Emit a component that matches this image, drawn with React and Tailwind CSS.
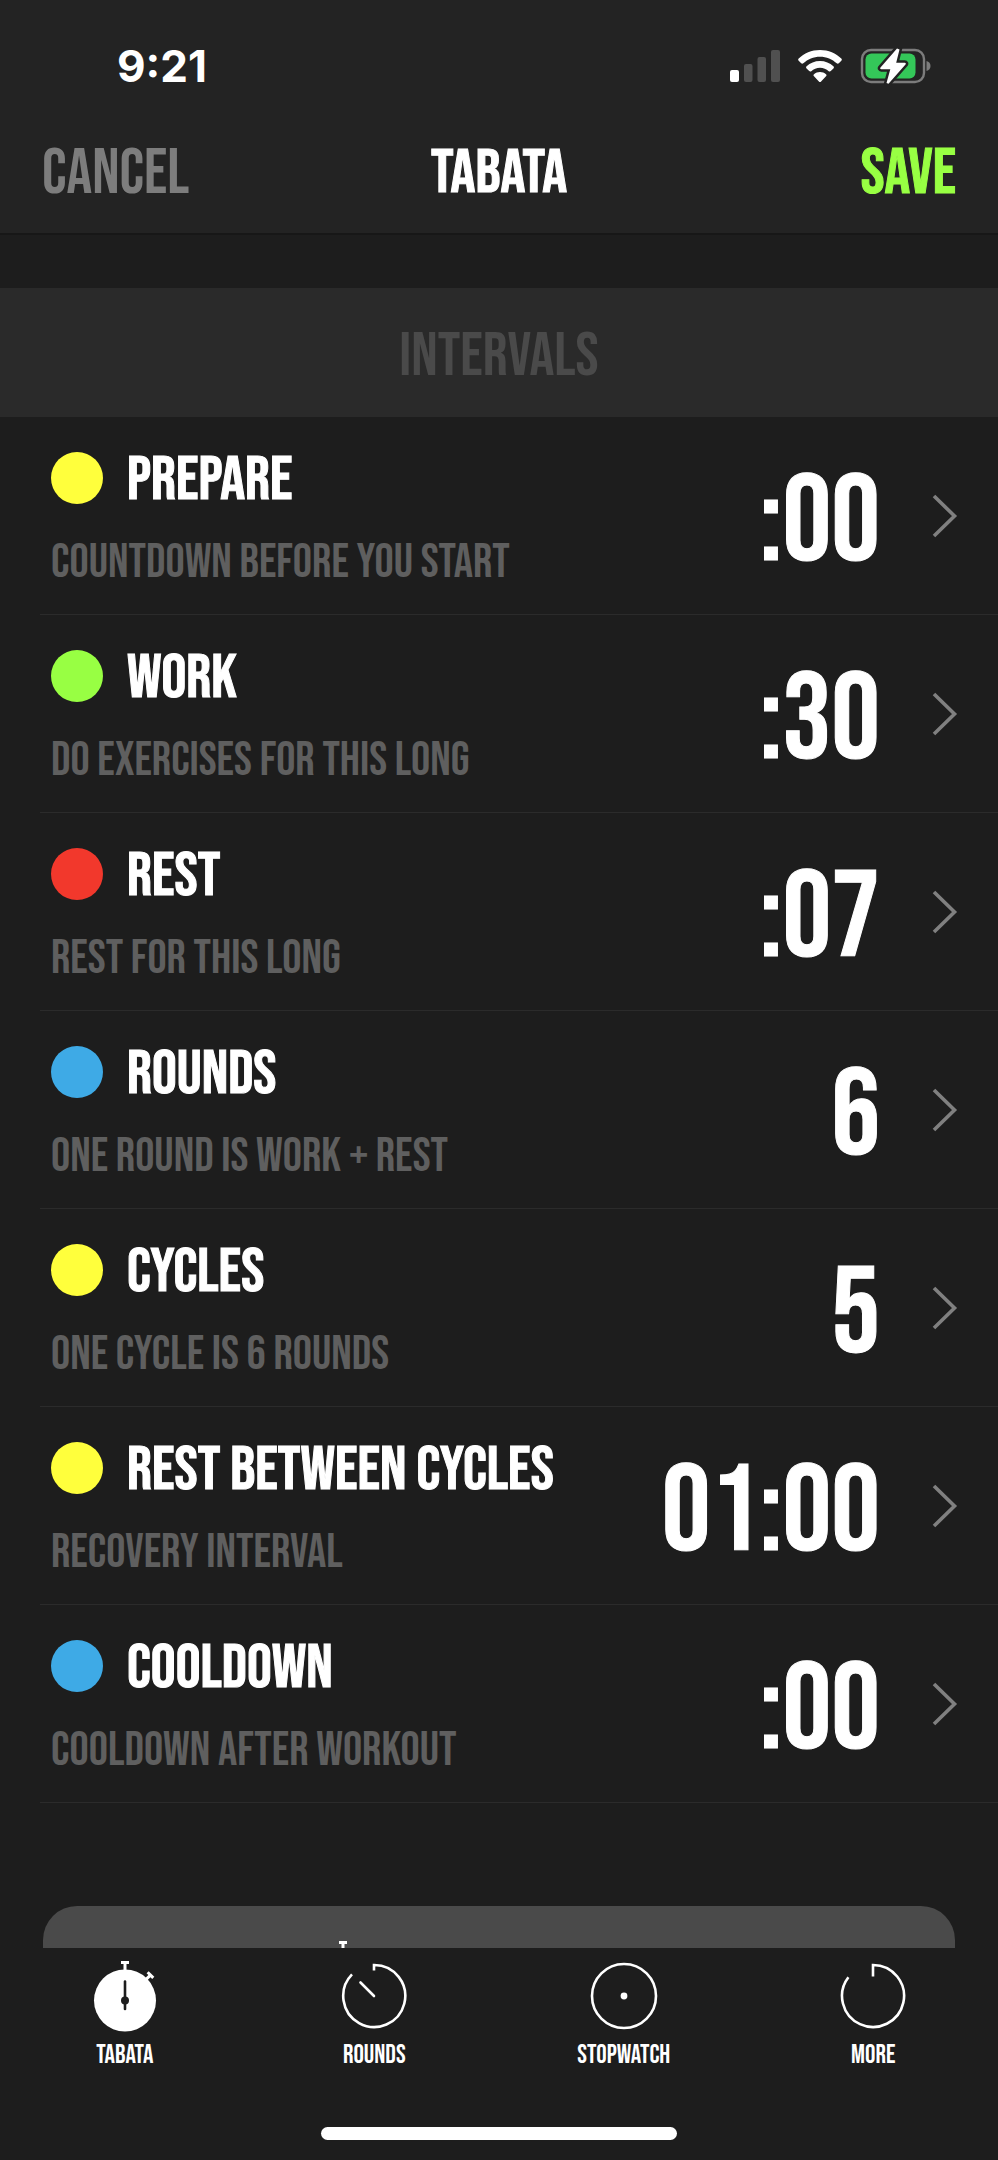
import React, { useState } from 'react';
import clsx from 'clsx';

const INTERVALS = [
  { id: 'prepare', title: 'PREPARE', detail: 'COUNTDOWN BEFORE YOU START', value: ':00', dot: 'bg-[#ffff3c]' },
  { id: 'work', title: 'WORK', detail: 'DO EXERCISES FOR THIS LONG', value: ':30', dot: 'bg-[#98ff43]' },
  { id: 'rest', title: 'REST', detail: 'REST FOR THIS LONG', value: ':07', dot: 'bg-[#f2382c]' },
  { id: 'rounds', title: 'ROUNDS', detail: 'ONE ROUND IS WORK + REST', value: '6', dot: 'bg-[#3eaae6]' },
  { id: 'cycles', title: 'CYCLES', detail: 'ONE CYCLE IS 6 ROUNDS', value: '5', dot: 'bg-[#ffff3c]' },
  { id: 'between', title: 'REST BETWEEN CYCLES', detail: 'RECOVERY INTERVAL', value: '01:00', dot: 'bg-[#ffff3c]' },
  { id: 'cooldown', title: 'COOLDOWN', detail: 'COOLDOWN AFTER WORKOUT', value: ':00', dot: 'bg-[#3eaae6]' },
];

const TABS = [
  { id: 'tabata', label: 'TABATA', Icon: TabataIcon },
  { id: 'rounds', label: 'ROUNDS', Icon: RoundsIcon },
  { id: 'stopwatch', label: 'STOPWATCH', Icon: StopwatchIcon },
  { id: 'more', label: 'MORE', Icon: MoreIcon },
];

function TabataIcon() {
  return (
    <svg width="70" height="74" viewBox="0 0 70 74" aria-hidden="true">
      <circle cx="35" cy="40.5" r="31" fill="#fff" />
      <path d="M31 1h8v3h-2.5v7h-3V4H31z" fill="#fff" />
      <g transform="rotate(45 35 40.5)">
        <path d="M31 3h8v3h-2.5v5h-3V6H31z" fill="#fff" />
      </g>
      <path d="M35 21.5v27.5" stroke="#1d1d1d" strokeWidth="2.6" strokeLinecap="round" />
      <circle cx="35" cy="40.5" r="4" fill="#1d1d1d" />
    </svg>
  );
}

function RoundsIcon() {
  return (
    <svg width="70" height="74" viewBox="0 0 70 74" fill="none" stroke="#fff" strokeWidth="2.6" aria-hidden="true">
      <path d="M35 10.5V5a31 31 0 1 1-22 9.4" />
      <path d="M35 36L21.5 22.5" strokeLinecap="round" />
    </svg>
  );
}

function StopwatchIcon() {
  return (
    <svg width="70" height="74" viewBox="0 0 70 74" aria-hidden="true">
      <circle cx="35" cy="36" r="32" fill="none" stroke="#fff" strokeWidth="2.6" />
      <circle cx="35" cy="36" r="3.4" fill="#fff" />
    </svg>
  );
}

function MoreIcon() {
  return (
    <svg width="70" height="74" viewBox="0 0 70 74" fill="none" stroke="#fff" strokeWidth="2.6" aria-hidden="true">
      <path d="M35 16.5V5a31 31 0 1 1-24.6 12.2" />
    </svg>
  );
}

function StatusBar() {
  return (
    <div className="flex h-[108px] items-center justify-between pl-[117px] pr-[66px] pt-6">
      <span className="font-['Inter',sans-serif] text-[44px] font-bold leading-none">9:21</span>
      <div className="flex items-center gap-[18px]">
        <svg width="50" height="36" viewBox="0 0 50 36" aria-hidden="true">
          <rect x="0" y="22" width="9" height="12" rx="2" fill="#fff" />
          <rect x="14" y="16" width="8.5" height="18" rx="2" fill="#505050" />
          <rect x="27.5" y="9" width="8.5" height="25" rx="2" fill="#505050" />
          <rect x="41" y="2" width="9" height="32" rx="2" fill="#505050" />
        </svg>
        <svg width="44" height="36" viewBox="0 0 44 36" fill="#fff" aria-hidden="true">
          <path d="M22 2C13.5 2 6 5.3.7 10.6c-.7.7-.7 1.5 0 2.2l2.5 2.5c.6.6 1.5.6 2.1 0C9.7 11.2 15.5 8.7 22 8.7s12.3 2.5 16.7 6.6c.6.6 1.5.6 2.1 0l2.5-2.5c.7-.7.7-1.5 0-2.2C38 5.3 30.5 2 22 2z" />
          <path d="M22 13c-5.2 0-9.9 2-13.4 5.3-.7.7-.7 1.5 0 2.2l2.6 2.6c.6.6 1.4.6 2.1.1 2.3-2.1 5.3-3.4 8.7-3.4s6.4 1.3 8.7 3.4c.7.5 1.5.5 2.1-.1l2.6-2.6c.7-.7.7-1.5 0-2.2C31.9 15 27.2 13 22 13z" />
          <path d="M22 24c-2.3 0-4.4.8-6 2.2-.7.6-.7 1.5 0 2.1l4.9 5.1c.6.7 1.6.7 2.2 0l4.9-5.1c.7-.6.7-1.5 0-2.1-1.6-1.4-3.7-2.2-6-2.2z" />
        </svg>
        <svg width="72" height="38" viewBox="0 0 72 38" aria-hidden="true">
          <rect x="2" y="3" width="62" height="32" rx="9" fill="none" stroke="#7c7c7c" strokeWidth="2.4" />
          <path d="M66.5 14c2.6.6 4 2.5 4 5s-1.4 4.4-4 5z" fill="#7c7c7c" />
          <rect x="5.5" y="6.5" width="50" height="25" rx="6" fill="#34c759" />
          <path
            d="M37 1.5L20.5 20.5c-.6.8-.3 1.7.8 1.7h9L26.5 36l2 .8L45.5 17.5c.7-.9.3-1.8-.8-1.8h-8.500L39.500 2.500z"
            fill="#fff"
            stroke="#232323"
            strokeWidth="5"
            paintOrder="stroke"
          />
        </svg>
      </div>
    </div>
  );
}

function IntervalRow({ title, detail, value, dot }) {
  return (
    <li className="ml-10 border-b border-[#2b2b2b]">
      <button type="button" className="flex h-[197px] w-full items-center justify-between pl-[11px] pr-10 text-left">
        <span className="flex flex-col gap-[30px]">
          <span className="flex items-center gap-6">
            <span className={clsx('size-[52px] shrink-0 rounded-full', dot)} />
            <span className="pt-1.5 text-[62px] leading-[52px] [-webkit-text-stroke:1px]">{title}</span>
          </span>
          <span className="pt-1.5 text-[48px] leading-10 text-[#5f5f5f]">{detail}</span>
        </span>
        <span className="flex items-center gap-[52px]">
          <span className="pt-4 text-[122px] leading-[122px] [-webkit-text-stroke:1px]">{value}</span>
          <svg width="26" height="44" viewBox="0 0 26 44" fill="none" stroke="#808080" strokeWidth="3.6" aria-hidden="true">
            <path d="M2 2l20.5 20L2 42" />
          </svg>
        </span>
      </button>
    </li>
  );
}

export default function App() {
  const [tab, setTab] = useState('tabata');

  return (
    <div className="flex h-screen flex-col overflow-hidden bg-[#1d1d1d] font-['Bebas_Neue','Liberation_Sans_Narrow',sans-serif] text-white">
      <header className="shrink-0 border-b-2 border-[#171717] bg-[#232323]">
        <StatusBar />
        <div className="grid h-[125px] grid-cols-3 items-center px-[42px] pt-1.5 text-[62px] leading-[52px]">
          <button type="button" className="justify-self-start text-[64px] text-[#7d7d7d]">CANCEL</button>
          <h1 className="justify-self-center [-webkit-text-stroke:1px]">TABATA</h1>
          <button type="button" className="justify-self-end text-[64px] text-[#98ff43] [-webkit-text-stroke:1px]">SAVE</button>
        </div>
      </header>

      <main className="min-h-0 flex-1 overflow-y-auto pt-[53px] [scrollbar-width:none]">
        <h2 className="flex h-[129px] items-center justify-center bg-[#2a2a2a] pt-2 text-[62px] leading-[52px] text-[#4a4a4a]">
          INTERVALS
        </h2>
        <ul>
          {INTERVALS.map((item) => (
            <IntervalRow key={item.id} {...item} />
          ))}
        </ul>
        <div className="mx-[43px] mt-[103px] flex h-[140px] justify-center rounded-[34px] bg-[#4a4a4a] pr-[312px] pt-[34px]">
          <TabataIcon />
        </div>
      </main>

      <nav className="flex h-[212px] shrink-0 flex-col items-center justify-between bg-[#1d1d1d] pb-5 pt-3">
        <div className="grid w-full grid-cols-4">
          {TABS.map(({ id, label, Icon }) => (
            <button
              key={id}
              type="button"
              aria-pressed={tab === id}
              onClick={() => setTab(id)}
              className="flex flex-col items-center gap-2 text-[26px] leading-7"
            >
              <Icon />
              {label}
            </button>
          ))}
        </div>
        <div className="h-[13px] w-[356px] rounded-full bg-white" />
      </nav>
    </div>
  );
}
